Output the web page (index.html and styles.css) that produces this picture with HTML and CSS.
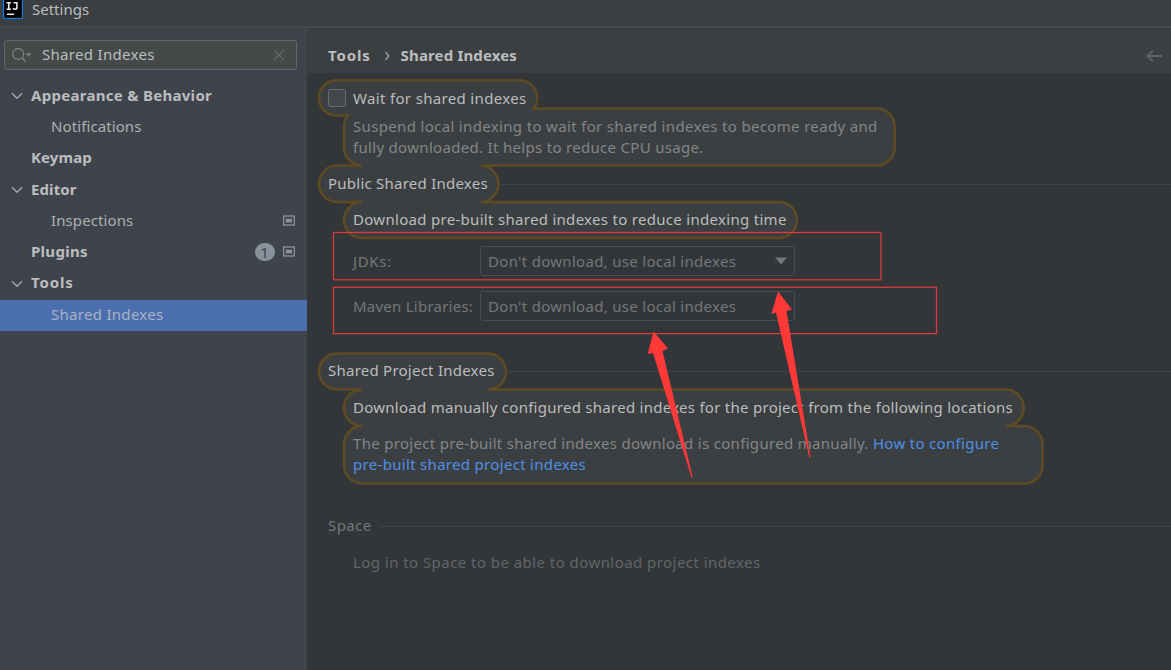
FILE: index.html
```html
<!DOCTYPE html>
<html lang="en">
<head>
<meta charset="utf-8">
<title>Settings</title>
<link rel="stylesheet" href="styles.css">
</head>
<body>
<header class="titlebar">
  <svg class="app-icon" width="20" height="19" viewBox="0 0 20 19">
    <rect x="0.5" y="-2" width="19" height="20.5" fill="#000" stroke="#087cf0" stroke-width="1.3"/>
    <path d="M3.5 2.8H8M5.75 2.8V9.2M3.5 9.2H8M10.5 2.8H13.9V7.5Q13.9 9.3 12.1 9.3Q10.8 9.3 10 8.3M4 14.3H11" fill="none" stroke="#e8e8e8" stroke-width="1.6"/>
  </svg>
  <span class="title">Settings</span>
</header>
<div class="window">
  <aside class="sidebar">
    <div class="search">
      <svg class="search-icon" width="22" height="18" viewBox="0 0 22 18"><circle cx="7.2" cy="8" r="5.5" fill="none" stroke="#7c8183" stroke-width="1.3"/><path d="M11 11.9L14.6 15.6" stroke="#7c8183" stroke-width="1.5"/><path d="M14.5 7.3H20.5L17.5 10.5Z" fill="#7c8183"/></svg>
      <span class="query">Shared Indexes</span>
      <svg width="12" height="12" viewBox="0 0 12 12"><path d="M1.2 1.2L10.8 10.8M10.8 1.2L1.2 10.8" stroke="#686c6e" stroke-width="1.1"/></svg>
    </div>
    <nav class="tree">
      <div class="row group"><svg class="chevron" width="12" height="8" viewBox="0 0 12 8"><path d="M1 1.2L6 6.2L11 1.2"/></svg><span class="t-appearance">Appearance &amp; Behavior</span></div>
      <div class="row leaf"><span class="t-notifications">Notifications</span></div>
      <div class="row group flat"><span class="t-keymap">Keymap</span></div>
      <div class="row group"><svg class="chevron" width="12" height="8" viewBox="0 0 12 8"><path d="M1 1.2L6 6.2L11 1.2"/></svg><span class="t-editor">Editor</span></div>
      <div class="row leaf"><span class="t-inspections">Inspections</span><svg class="project" width="12" height="11" viewBox="0 0 12 11"><rect x=".7" y="1" width="10.6" height="9" fill="none" stroke="#8b949c" stroke-width="1.3"/><rect x="3" y="3.7" width="6" height="3.7" fill="#8b949c"/></svg></div>
      <div class="row group flat"><span class="t-plugins">Plugins</span><span class="badge">1</span><svg class="project" width="12" height="11" viewBox="0 0 12 11"><rect x=".7" y="1" width="10.6" height="9" fill="none" stroke="#8b949c" stroke-width="1.3"/><rect x="3" y="3.7" width="6" height="3.7" fill="#8b949c"/></svg></div>
      <div class="row group"><svg class="chevron" width="12" height="8" viewBox="0 0 12 8"><path d="M1 1.2L6 6.2L11 1.2"/></svg><span class="t-tools">Tools</span></div>
      <div class="row leaf selected"><span class="t-selected">Shared Indexes</span></div>
    </nav>
  </aside>
  <main class="page">
    <div class="crumbs">
      <span class="t-crumb1">Tools</span>
      <svg class="sep" width="7" height="10" viewBox="0 0 7 10"><path d="M1.5 1L4.8 5L1.5 9" fill="none" stroke="#a0a2a3" stroke-width="1.3"/></svg>
      <span class="t-crumb2">Shared Indexes</span>
      <svg class="back" width="17" height="14" viewBox="0 0 17 14"><path d="M1.5 7H16M7 1.5L1.5 7L7 12.5" fill="none" stroke="#606365" stroke-width="1.8"/></svg>
    </div>
    <div class="content">
      <div class="check"><i class="box"></i><span class="t-wait">Wait for shared indexes</span></div>
      <p class="hint suspend"><span class="t-sus1">Suspend local indexing to wait for shared indexes to become ready and</span><br><span class="t-sus2">fully downloaded. It helps to reduce CPU usage.</span></p>
      <h2 class="section public"><span class="t-public">Public Shared Indexes</span></h2>
      <p class="lead download"><span class="t-download">Download pre-built shared indexes to reduce indexing time</span></p>
      <div class="field"><label><span class="t-jdks">JDKs:</span></label><div class="combo"><span class="t-combo">Don't download, use local indexes</span><svg width="12" height="8" viewBox="0 0 12 8"><path d="M0 .5H12L6 7.5Z" fill="#75787a"/></svg></div></div>
      <div class="field second"><label><span class="t-maven">Maven Libraries:</span></label><div class="combo"><span class="t-combo">Don't download, use local indexes</span></div></div>
      <h2 class="section shared"><span class="t-shared">Shared Project Indexes</span></h2>
      <p class="lead manual"><span class="t-manual">Download manually configured shared indexes for the project from the following locations</span></p>
      <p class="hint project-hint"><span class="t-proj">The project pre-built shared indexes download is configured manually. </span><a class="t-link1">How to configure</a><br><a class="t-link2">pre-built shared project indexes</a></p>
      <h2 class="section space"><span class="t-space">Space</span></h2>
      <p class="lead login"><span class="t-login">Log in to Space to be able to download project indexes</span></p>
    </div>
  </main>
</div>
<svg class="spotlight" width="1171" height="670" viewBox="0 0 1171 670">
  <path d="M336.5 80.2H519.5A17.5 17.5 0 0 1 533.5 108.5H876.7a18 18 0 0 1 18 18V147.5a18 18 0 0 1 -18 18H480.5a18 18.25 0 0 1 0 36.5H779a18 18 0 0 1 0 36H362a18 18 0 0 1 0 -36H337a18 18.25 0 0 1 0 -36.5H362a18 18 0 0 1 -18 -18V126.5A18 18 0 0 1 347.8 115.5H336.5a17.5 17.6 0 0 1 0 -35.3Z"/>
  <path d="M337 353.5H488a18 18 0 0 1 0 36H1005.7a18 18.25 0 0 1 0 36.5H1024.5a18 18 0 0 1 18 18V465.5a18 18 0 0 1 -18 18H362a18 18 0 0 1 -18 -18V444a18 18 0 0 1 18 -18a18 18.25 0 0 1 0 -36.5H337a18 18 0 0 1 0 -36Z"/>
</svg>
<svg class="marks" width="1171" height="670" viewBox="0 0 1171 670">
  <g fill="none" stroke="#d93a3a" stroke-width="1.3"><rect x="333.5" y="232.5" width="547.5" height="47.3"/><rect x="333.5" y="287.3" width="603" height="46.3"/></g>
  <path d="M653.5 331.5L668 348.5L662.5 351L692.7 477.5H691.5L653 353L647.7 354Z" fill="#ff3838"/>
  <path d="M778 291.5L792 309.5L786.5 311L810.5 457.5H809.3L776 312.5L771.3 314Z" fill="#ff3838"/>
</svg>
</body>
</html>
```
FILE: styles.css
```css
* { box-sizing: border-box; }
body { margin: 0; height: 670px; overflow: hidden; position: relative; display: flex; flex-direction: column; background: #333639; color: #bbbdbe; font: 15px/21px "Noto Sans", sans-serif; white-space: nowrap; }
p, h2 { margin: 0; font-size: 15px; font-weight: 400; }
svg { flex: none; display: block; }
.titlebar { height: 28px; background: #3c3f41; border-bottom: 2px solid #484b4d; display: flex; padding-left: 3px; gap: 9px; }
.title { line-height: 19px; }
.window { flex: 1; display: flex; min-height: 0; }
.sidebar { width: 307px; background: #3f434c; padding: 12px 0 0; }
.search { margin: 0 10px 0 4px; height: 30px; border: 1px solid #62676a; border-radius: 3px; background: #45494a; display: flex; align-items: center; padding: 0 11px 0 6px; }
.search-icon { margin-right: 9px; }
.query { flex: 1; letter-spacing: .3px; padding-bottom: 1px; }
.tree { margin-top: 11px; }
.row { height: 31.25px; display: flex; align-items: center; padding-right: 12.5px; }
.row span { padding-bottom: 2.5px; }
.group { font-weight: 700; padding-left: 11px; }
.group.flat { padding-left: 31px; }
.leaf { padding-left: 51px; color: #adb0b3; }
.chevron { margin: 0 8px 1px 0; fill: none; stroke: #a5a8ab; stroke-width: 1.4; }
.project { margin-left: auto; margin-bottom: 2px; }
.row .badge { margin: 0 8px 1.5px auto; padding: 0; width: 20px; height: 18px; border-radius: 9px; background: #87929a; color: #3f434c; font-weight: 400; line-height: 18px; text-align: center; }
.badge + .project { margin-left: 0; }
.selected { background: #4b6eaf; color: #aab3c4; }
.page { flex: 1; display: flex; flex-direction: column; min-width: 0; }
.crumbs { height: 45px; padding: 10px 8px 0 21px; background: #3c3f41; display: flex; align-items: center; font-weight: 700; }
.sep { margin: 0 10px 0 13px; }
.back { margin-left: auto; }
.content { padding: 15px 0 0 21px; position: relative; z-index: 2; }
.check { display: flex; align-items: center; height: 21px; gap: 7px; }
.box { width: 18px; height: 18px; margin-bottom: 2px; border: 1px solid #666a6c; border-radius: 2px; background: #43484a; }
.hint { padding-left: 25px; color: #838586; }
.suspend { margin-top: 7px; }
.section { display: flex; align-items: center; gap: 8px; height: 21px; }
.section span { padding-bottom: 2px; }
.section::after { content: ""; flex: 1; height: 1px; background: #414446; }
.public { margin-top: 16px; }
.lead { padding-left: 25px; }
.download { margin-top: 14px; }
.field { display: flex; align-items: center; height: 30px; margin-top: 16px; padding-left: 25px; color: #747778; }
.field label { width: 127px; }
.second { margin-top: 15px; }
.combo { width: 315px; height: 30px; border: 1px solid #4a4d4f; border-radius: 3px; display: flex; justify-content: space-between; align-items: center; padding: 0 7px; }
.shared { margin-top: 40px; }
.manual { margin-top: 15px; }
.project-hint { margin-top: 15px; }
.project-hint a { color: #4e8fe6; }
.space { margin-top: 41px; color: #747778; }
.login { margin-top: 15px; color: #626566; }
.spotlight, .marks { position: absolute; left: 0; top: 0; }
.spotlight { z-index: 1; fill: #3c3f41; stroke: #5f4b21; stroke-width: 2.5; }
.marks { z-index: 3; }

.t-appearance, .t-plugins, .t-selected { letter-spacing: .29px; }
.t-notifications, .t-keymap, .t-editor, .t-inspections { letter-spacing: .1px; }
.t-tools, .t-crumb1 { letter-spacing: .85px; }
.t-crumb2 { letter-spacing: .15px; }
.t-wait, .t-sus1 { letter-spacing: .34px; }
.t-sus2, .t-link1, .t-link2 { letter-spacing: .31px; }
.t-public, .t-shared, .t-maven { letter-spacing: .24px; }
.t-download, .t-combo { letter-spacing: .3px; }
.t-manual { letter-spacing: .27px; }
.t-proj { letter-spacing: .31px; }
.t-jdks { letter-spacing: .6px; }
.t-space { letter-spacing: .4px; }
.t-login { letter-spacing: .445px; }
```
